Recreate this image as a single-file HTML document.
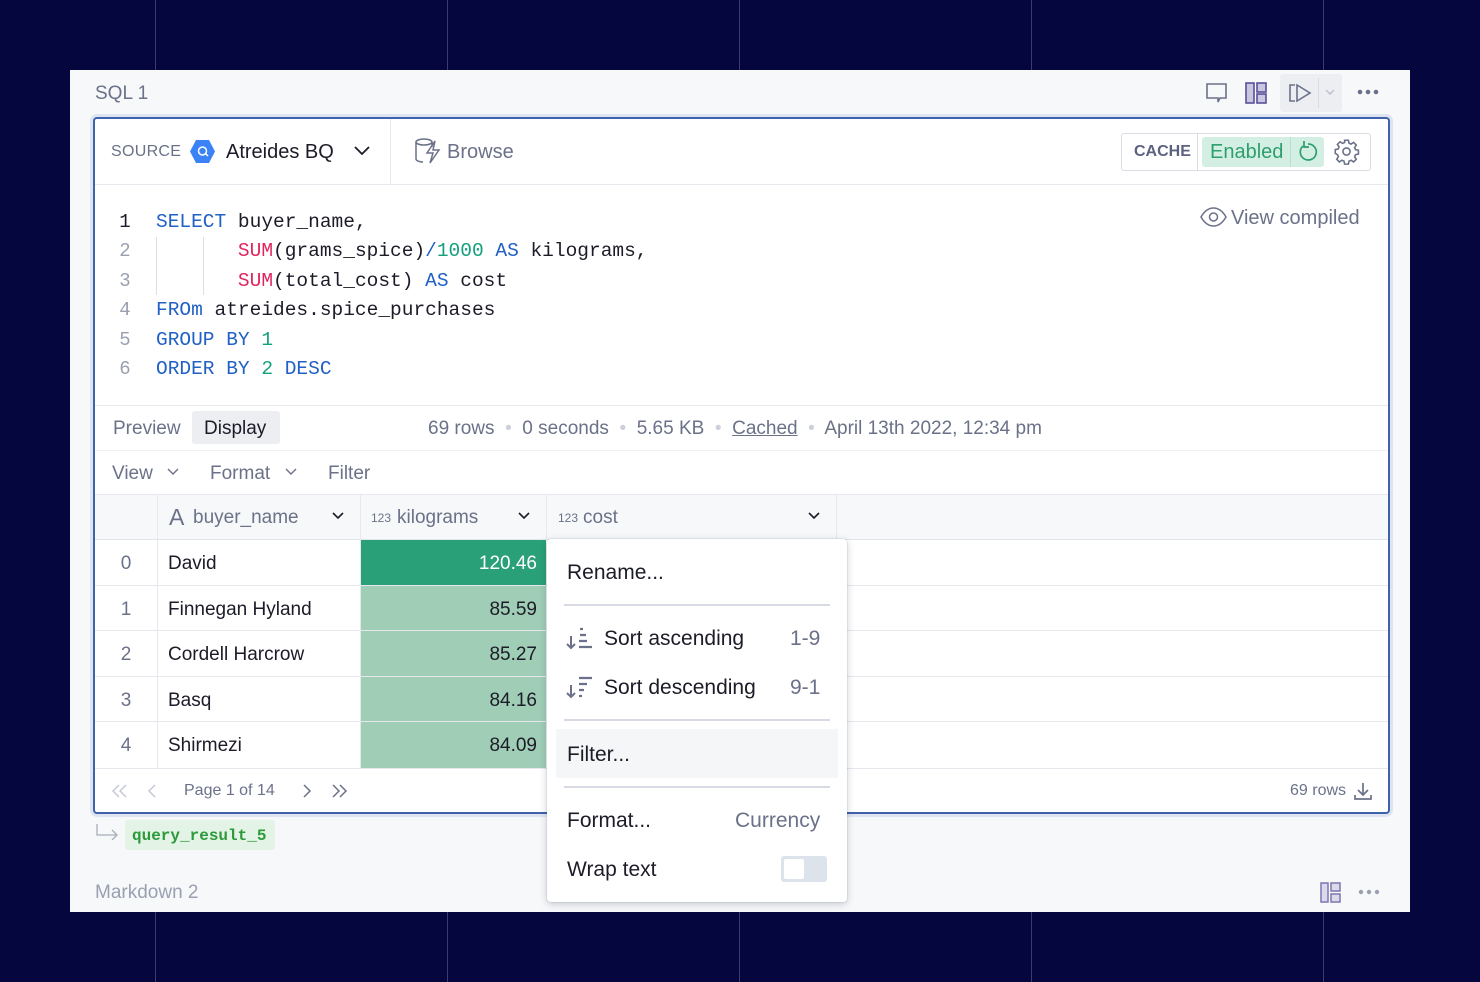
<!DOCTYPE html>
<html><head><meta charset="utf-8"><style>
*{box-sizing:border-box;margin:0;padding:0}
body{width:1480px;height:982px;background:#06063f;position:relative;overflow:hidden;font-family:"Liberation Sans",sans-serif;}
.vl{position:absolute;top:0;width:1px;height:982px;background:#3a3a6e}
.a{position:absolute;white-space:nowrap}
.panel{position:absolute;left:70px;top:70px;width:1340px;height:842px;background:#f7f8fa}
.card{position:absolute;left:93px;top:117px;width:1297px;height:697px;background:#fff;border:2px solid #3f62ad;border-radius:4px;box-shadow:0 0 0 3px #dfe5f0}
.mono{font-family:"Liberation Mono",monospace;font-size:19.5px;color:#1c1c28}
.kw{color:#2160c4}.fn{color:#e0245e}.nm{color:#13a07c}
.ln{color:#9aa0b0;font-family:"Liberation Mono",monospace;font-size:19px}
.g{color:#6b7188}
.hl{position:absolute;height:1px;background:#e6e8ee}
.vlin{position:absolute;width:1px;background:#e6e8ee}
.t18{font-size:19px}
</style></head><body>
<div class="vl" style="left:155px"></div><div class="vl" style="left:447px"></div><div class="vl" style="left:739px"></div><div class="vl" style="left:1031px"></div><div class="vl" style="left:1323px"></div>
<div class="panel"></div>
<div class="a g" style="left:95px;top:83px;font-size:19px">SQL 1</div>
<svg class="a" style="left:1205px;top:82px" width="24" height="22" viewBox="0 0 24 22"><path d="M2 2h19v14h-6l-2 4v-4H2z" fill="none" stroke="#6b7188" stroke-width="1.6"/></svg>
<svg class="a" style="left:1245px;top:82px" width="22" height="22"><rect x="1" y="1" width="8" height="20" fill="#c8c6e0" stroke="#5b4f9a" stroke-width="1.6"/><rect x="12" y="1" width="9" height="9" fill="#c8c6e0" stroke="#5b4f9a" stroke-width="1.6"/><rect x="12" y="12" width="9" height="9" fill="#c8c6e0" stroke="#5b4f9a" stroke-width="1.6"/></svg>
<div class="a" style="left:1280px;top:74px;width:62px;height:38px;background:#eceef2;border-radius:3px"></div>
<svg class="a" style="left:1287px;top:82px" width="26" height="22"><path d="M8 3H3v16h5" fill="none" stroke="#6b7188" stroke-width="1.6"/><path d="M10 3l13 8-13 8z" fill="none" stroke="#6b7188" stroke-width="1.6"/></svg>
<div class="a" style="left:1318px;top:78px;width:1px;height:30px;background:#d8dbe2"></div>
<svg class="a" style="left:1324px;top:88px" width="12" height="8"><path d="M2 2l4 4 4-4" fill="none" stroke="#b5b9c6" stroke-width="1.2"/></svg>
<svg class="a" style="left:1357px;top:89px" width="22" height="6"><circle cx="3" cy="3" r="2.3" fill="#6b7188"/><circle cx="11" cy="3" r="2.3" fill="#6b7188"/><circle cx="19" cy="3" r="2.3" fill="#6b7188"/></svg>

<div class="card"></div>
<div class="hl" style="left:95px;top:184px;width:1293px;background:#e8eaef"></div>
<div class="vlin" style="left:390px;top:119px;height:65px"></div>
<div class="a g" style="left:111px;top:143px;font-size:16px;letter-spacing:.3px">SOURCE</div>
<svg class="a" style="left:189px;top:139px" width="27" height="25"><path d="M7 1h13l6 11.5-6 11.5H7L1 12.5z" fill="#3b82f6"/><circle cx="13.5" cy="12" r="4" fill="none" stroke="#fff" stroke-width="1.5"/><path d="M16 14l3 3" stroke="#fff" stroke-width="1.5"/></svg>
<div class="a" style="left:226px;top:141px;font-size:20px;color:#1c1c28">Atreides BQ</div>
<svg class="a" style="left:353px;top:145px" width="18" height="12"><path d="M2 2l7 7 7-7" fill="none" stroke="#1c1c28" stroke-width="1.8"/></svg>
<svg class="a" style="left:413px;top:137px" width="28" height="28"><ellipse cx="11" cy="5" rx="8" ry="3" fill="none" stroke="#6b7188" stroke-width="1.5"/><path d="M3 5v17c0 1.5 3 3 7 3M19 5v5" fill="none" stroke="#6b7188" stroke-width="1.5"/><path d="M22 4l-8 12h6l-3 10 9-13h-6z" fill="none" stroke="#6b7188" stroke-width="1.5"/></svg>
<div class="a g" style="left:447px;top:141px;font-size:20px">Browse</div>
<div class="a" style="left:1121px;top:133px;width:250px;height:38px;border:1px solid #d9dce3;border-radius:3px"></div>
<div class="a" style="left:1197px;top:134px;width:1px;height:36px;background:#d9dce3"></div>
<div class="a g" style="left:1134px;top:143px;font-size:16px;font-weight:bold;color:#5c6280">CACHE</div>
<div class="a" style="left:1202px;top:137px;width:122px;height:30px;background:#d3efe3;border-radius:3px"></div>
<div class="a" style="left:1290px;top:137px;width:1px;height:30px;background:#b5e0cd"></div>
<div class="a" style="left:1210px;top:141px;font-size:20px;color:#2e9e6e">Enabled</div>
<svg class="a" style="left:1296px;top:139px" width="24" height="26"><path d="M7 7a8 8 0 1 0 5-2" fill="none" stroke="#2e9e6e" stroke-width="1.7"/><path d="M8 2v6h5" fill="none" stroke="#2e9e6e" stroke-width="1.7"/></svg>
<svg class="a" style="left:1333px;top:138px" width="27" height="27" viewBox="0 0 24 24"><path d="M10.3 2h3.4l.5 2.6 1.9.8 2.2-1.5 2.4 2.4-1.5 2.2.8 1.9 2.6.5v3.4l-2.6.5-.8 1.9 1.5 2.2-2.4 2.4-2.2-1.5-1.9.8-.5 2.6h-3.4l-.5-2.6-1.9-.8-2.2 1.5-2.4-2.4 1.5-2.2-.8-1.9L2 13.7v-3.4l2.6-.5.8-1.9-1.5-2.2 2.4-2.4 2.2 1.5 1.9-.8z" fill="none" stroke="#6b7188" stroke-width="1.4"/><circle cx="12" cy="12" r="3.2" fill="none" stroke="#6b7188" stroke-width="1.4"/></svg>
<div class="a ln" style="left:118px;top:208px;line-height:29.4px;width:14px;text-align:center"><span style="color:#1c1c28">1</span><br>2<br>3<br>4<br>5<br>6</div>
<div class="vlin" style="left:156px;top:237px;height:58px;background:#dcdfe6"></div>
<div class="vlin" style="left:203px;top:237px;height:58px;background:#dcdfe6"></div>
<div class="a mono" style="left:156px;top:208px;line-height:29.4px;white-space:pre"><span class="kw">SELECT</span> buyer_name,
       <span class="fn">SUM</span>(grams_spice)<span class="kw">/</span><span class="nm">1000</span> <span class="kw">AS</span> kilograms,
       <span class="fn">SUM</span>(total_cost) <span class="kw">AS</span> cost
<span class="kw">FROm</span> atreides.spice_purchases
<span class="kw">GROUP BY</span> <span class="nm">1</span>
<span class="kw">ORDER BY</span> <span class="nm">2</span> <span class="kw">DESC</span></div>
<svg class="a" style="left:1200px;top:207px" width="27" height="20"><path d="M1 10C5 3 10 1 13.5 1S22 3 26 10c-4 7-9 9-12.5 9S5 17 1 10z" fill="none" stroke="#6b7188" stroke-width="1.5"/><circle cx="13.5" cy="10" r="4" fill="none" stroke="#6b7188" stroke-width="1.5"/></svg>
<div class="a g" style="left:1231px;top:207px;font-size:20px">View compiled</div>
<div class="hl" style="left:95px;top:405px;width:1293px"></div>
<div class="a g" style="left:113px;top:418px;font-size:19px">Preview</div>
<div class="a" style="left:192px;top:411px;width:88px;height:33px;background:#eceef2;border-radius:3px"></div>
<div class="a" style="left:204px;top:418px;font-size:19px;color:#1c1c28">Display</div>
<div class="a g" style="left:428px;top:418px;font-size:19px">69 rows <span style="color:#ccd0da">&nbsp;•&nbsp;</span> 0 seconds <span style="color:#ccd0da">&nbsp;•&nbsp;</span> 5.65 KB <span style="color:#ccd0da">&nbsp;•&nbsp;</span> <u>Cached</u> <span style="color:#ccd0da">&nbsp;•&nbsp;</span> April 13th 2022, 12:34 pm</div>
<div class="hl" style="left:95px;top:450px;width:1293px;background:#f0f1f4"></div>
<div class="a g" style="left:112px;top:463px;font-size:19px">View</div>
<svg class="a" style="left:166px;top:467px" width="14" height="9"><path d="M2 2l5 5 5-5" fill="none" stroke="#6b7188" stroke-width="1.4"/></svg>
<div class="a g" style="left:210px;top:463px;font-size:19px">Format</div>
<svg class="a" style="left:284px;top:467px" width="14" height="9"><path d="M2 2l5 5 5-5" fill="none" stroke="#6b7188" stroke-width="1.4"/></svg>
<div class="a g" style="left:328px;top:463px;font-size:19px">Filter</div>
<div class="a" style="left:95px;top:494px;width:1293px;height:46px;background:#f7f8fa;border-top:1px solid #e6e8ee;border-bottom:1px solid #e1e4ea"></div>
<div class="vlin" style="left:157px;top:494px;height:274px"></div>
<div class="vlin" style="left:360px;top:494px;height:274px"></div>
<div class="vlin" style="left:546px;top:494px;height:46px"></div>
<div class="vlin" style="left:836px;top:494px;height:46px"></div>
<div class="a g" style="left:169px;top:504px;font-size:23px">A</div>
<div class="a g" style="left:193px;top:507px;font-size:19px">buyer_name</div>
<svg class="a" style="left:331px;top:511px" width="14" height="9"><path d="M2 2l5 5 5-5" fill="none" stroke="#1c1c28" stroke-width="1.6"/></svg>
<div class="a g" style="left:371px;top:511px;font-size:12px">123</div>
<div class="a g" style="left:397px;top:507px;font-size:19px">kilograms</div>
<svg class="a" style="left:517px;top:511px" width="14" height="9"><path d="M2 2l5 5 5-5" fill="none" stroke="#1c1c28" stroke-width="1.6"/></svg>
<div class="a g" style="left:558px;top:511px;font-size:12px">123</div>
<div class="a g" style="left:583px;top:507px;font-size:19px">cost</div>
<svg class="a" style="left:807px;top:511px" width="14" height="9"><path d="M2 2l5 5 5-5" fill="none" stroke="#1c1c28" stroke-width="1.6"/></svg>

<div class="a" style="left:361px;top:540px;width:185px;height:45px;background:#2aa079"></div>
<div class="a" style="left:361px;top:586px;width:185px;height:182px;background:#9fcdb5"></div>
<div class="hl" style="left:95px;top:585px;width:1293px"></div>
<div class="hl" style="left:95px;top:630px;width:1293px"></div>
<div class="hl" style="left:95px;top:676px;width:1293px"></div>
<div class="hl" style="left:95px;top:721px;width:1293px"></div>
<div class="hl" style="left:95px;top:768px;width:1293px"></div>
<div class="a g t18" style="left:120px;top:541px;line-height:45.6px;text-align:center;width:12px">0<br>1<br>2<br>3<br>4</div>
<div class="a t18" style="left:168px;top:541px;line-height:45.6px;color:#1c1c28">David<br>Finnegan Hyland<br>Cordell Harcrow<br>Basq<br>Shirmezi</div>
<div class="a t18" style="left:440px;top:541px;line-height:45.6px;color:#1c1c28;text-align:right;width:97px"><span style="color:#fff">120.46</span><br>85.59<br>85.27<br>84.16<br>84.09</div>
<svg class="a" style="left:110px;top:783px" width="18" height="16"><path d="M9 2L3 8l6 6M16 2l-6 6 6 6" fill="none" stroke="#c5c9d4" stroke-width="1.5"/></svg>
<svg class="a" style="left:146px;top:783px" width="12" height="16"><path d="M9 2L3 8l6 6" fill="none" stroke="#c5c9d4" stroke-width="1.5"/></svg>
<div class="a g" style="left:184px;top:782px;font-size:16px">Page 1 of 14</div>
<svg class="a" style="left:301px;top:783px" width="12" height="16"><path d="M3 2l6 6-6 6" fill="none" stroke="#6b7188" stroke-width="1.5"/></svg>
<svg class="a" style="left:331px;top:783px" width="18" height="16"><path d="M2 2l6 6-6 6M9 2l6 6-6 6" fill="none" stroke="#6b7188" stroke-width="1.5"/></svg>
<div class="a g" style="left:1290px;top:782px;font-size:16px">69 rows</div>
<svg class="a" style="left:1354px;top:782px" width="18" height="19"><path d="M9 1v11M4 8l5 5 5-5M1 13v4h16v-4" fill="none" stroke="#6b7188" stroke-width="1.7"/></svg>
<svg class="a" style="left:95px;top:824px" width="25" height="16"><path d="M2 0v11h20M17 6l5 5-5 5" fill="none" stroke="#a8adba" stroke-width="1.3"/></svg>
<div class="a" style="left:125px;top:820px;width:150px;height:30px;background:#e3f3e6;border-radius:3px"></div>
<div class="a" style="left:132px;top:827px;font-family:'Liberation Mono',monospace;font-size:16px;font-weight:bold;color:#2d9a3a">query_result_5</div>
<div class="a" style="left:95px;top:882px;font-size:19px;color:#9aa0b0">Markdown 2</div>
<svg class="a" style="left:1320px;top:882px" width="21" height="21"><rect x="1" y="1" width="7" height="19" fill="#dcdaea" stroke="#7e74b0" stroke-width="1.5"/><rect x="11" y="1" width="9" height="8" fill="#dcdaea" stroke="#7e74b0" stroke-width="1.5"/><rect x="11" y="12" width="9" height="8" fill="#dcdaea" stroke="#7e74b0" stroke-width="1.5"/></svg>
<svg class="a" style="left:1358px;top:889px" width="22" height="6"><circle cx="3" cy="3" r="2.2" fill="#9aa0b0"/><circle cx="11" cy="3" r="2.2" fill="#9aa0b0"/><circle cx="19" cy="3" r="2.2" fill="#9aa0b0"/></svg>
<div class="a" style="left:547px;top:539px;width:300px;height:363px;background:#fff;border-radius:4px;box-shadow:0 2px 8px rgba(20,30,60,.22),0 0 0 1px rgba(20,30,60,.06)"></div>
<div class="a" style="left:567px;top:561px;font-size:21px;color:#1c1c28">Rename...</div>
<div class="hl" style="left:564px;top:604px;width:266px;background:#d8dbe3;height:2px"></div>
<svg class="a" style="left:566px;top:626px" width="28" height="26"><path d="M5 10v12M1 18l4 4 4-4" fill="none" stroke="#6b7188" stroke-width="2"/><path d="M14 3h3M14 9h6M13 15h8M13 21h13" stroke="#6b7188" stroke-width="2.2"/></svg>
<div class="a" style="left:604px;top:627px;font-size:21px;color:#1c1c28">Sort ascending</div>
<div class="a g" style="left:790px;top:627px;font-size:21px">1-9</div>
<svg class="a" style="left:566px;top:675px" width="28" height="26"><path d="M5 10v12M1 18l4 4 4-4" fill="none" stroke="#6b7188" stroke-width="2"/><path d="M13 3h13M13 9h8M13 15h5M13 21h3" stroke="#6b7188" stroke-width="2.2"/></svg>
<div class="a" style="left:604px;top:676px;font-size:21px;color:#1c1c28">Sort descending</div>
<div class="a g" style="left:790px;top:676px;font-size:21px">9-1</div>
<div class="hl" style="left:564px;top:719px;width:266px;background:#d8dbe3;height:2px"></div>
<div class="a" style="left:556px;top:729px;width:282px;height:49px;background:#f5f6f8"></div>
<div class="a" style="left:567px;top:743px;font-size:21px;color:#1c1c28">Filter...</div>
<div class="hl" style="left:564px;top:786px;width:266px;background:#d8dbe3;height:2px"></div>
<div class="a" style="left:567px;top:809px;font-size:21px;color:#1c1c28">Format...</div>
<div class="a g" style="left:735px;top:809px;font-size:21px">Currency</div>
<div class="a" style="left:567px;top:858px;font-size:21px;color:#1c1c28">Wrap text</div>
<div class="a" style="left:781px;top:856px;width:46px;height:26px;background:#dde3ea;border-radius:3px"></div>
<div class="a" style="left:784px;top:859px;width:20px;height:20px;background:#fff;border-radius:2px"></div>
</body></html>
